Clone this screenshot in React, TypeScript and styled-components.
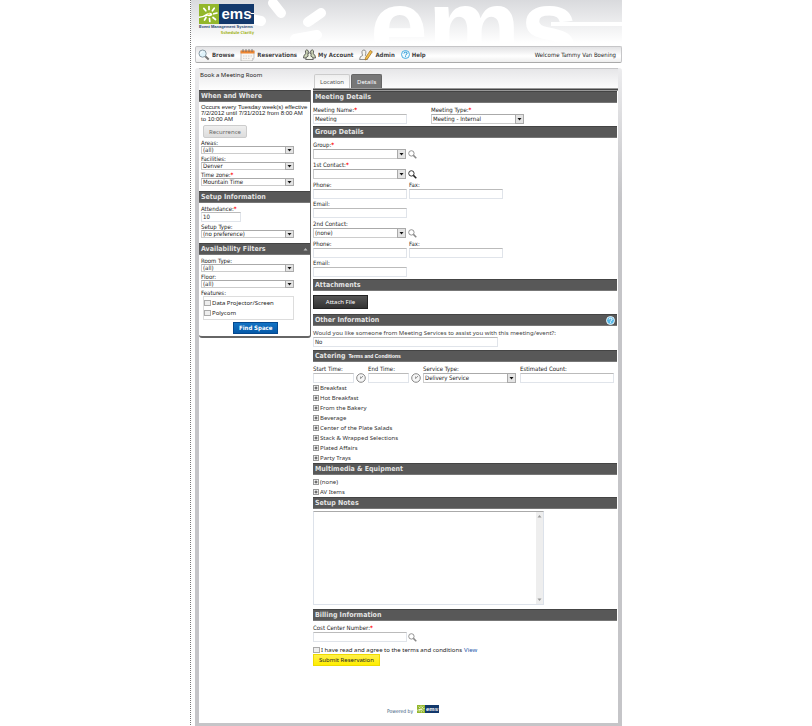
import React from 'react';
import styled, { createGlobalStyle, css } from 'styled-components';

const narrow = `'DejaVu Sans Condensed', 'DejaVu Sans', Verdana, sans-serif`;
const wide = `'DejaVu Sans', Verdana, sans-serif`;
const medium = `'Noto Sans', 'DejaVu Sans', sans-serif`;
const compact = `'Liberation Sans', Arial, sans-serif`;

const GlobalStyle = createGlobalStyle`
  * { box-sizing: border-box; }
  body { margin: 0; background: #fff; color: #222; font: 6px/8px ${narrow}; }
  button, input, select, textarea { font: inherit; color: inherit; margin: 0; }
  svg { display: block; flex: none; }
`;

const Page = styled.div`
  max-width: 432px;
  margin: 0 auto;
  padding-left: 4px;
  border-left: 1px dotted #777;
`;

const Banner = styled.header`
  position: relative;
  height: 46px;
  margin-left: -4px;
  background: linear-gradient(#d9dadd, #fff 43px);
  overflow: hidden;
`;

const BannerArt = styled.svg`
  position: absolute;
  inset: 0;
`;

const Brand = styled.a`
  position: absolute;
  left: 8px;
  top: 4px;
  text-decoration: none;
`;

const Nav = styled.nav`
  display: flex;
  align-items: center;
  height: 17px;
  padding: 0 5px 0 2px;
  gap: 6px;
  border: 1px solid #c6c6c8;
  border-bottom-color: #aaa;
  border-radius: 2px;
  background: linear-gradient(#e2e2e4, #fff 60%, #eee);
`;

const NavLink = styled.a`
  display: flex;
  align-items: center;
  gap: 2px;
  color: #444;
  font-weight: bold;
  text-decoration: none;
`;

const Welcome = styled.span`
  margin-left: auto;
`;

const Panel = styled.main`
  margin-top: 5px;
  padding: 0 4px 4px;
  border-radius: 3px 3px 0 0;
  background: linear-gradient(#ececee, #c5c5c8 130px);
`;

const Sheet = styled.div`
  display: grid;
  grid-template-columns: 112px 1fr;
  column-gap: 2px;
  align-items: start;
  padding-right: 1px;
  background: linear-gradient(#e6e6e8, #fff 22px);
  border-top: 1px solid #c6c6c8;
`;

const Title = styled.h1`
  margin: 0;
  padding: 2px 1px 0;
  height: 21px;
  font: normal 6px/8px ${medium};
`;

const SideCard = styled.div`
  border: solid #666;
  border-width: 0 1px 2px 0;
  border-radius: 0 0 3px 3px;
`;

const SideBody = styled.div<{ $top?: number; $bottom?: number }>`
  display: flex;
  flex-direction: column;
  align-items: flex-start;
  gap: 1px;
  padding: ${p => p.$top ?? 2}px 16px ${p => p.$bottom ?? 5}px 2px;
`;

const Bar = styled.h2`
  display: flex;
  align-items: center;
  gap: 3px;
  height: 12px;
  margin: 0;
  padding: 0 2px;
  border: solid #777;
  border-width: 1px 0;
  border-top-color: #444;
  background: #585858;
  color: #e4e4e4;
  font: bold 7px/10px ${narrow};
`;

const BarLink = styled.a`
  color: #fff;
  font: bold 5px/10px ${compact};
  text-decoration: none;
`;

const BarEnd = styled.span`
  margin-left: auto;
`;

const Schedule = styled.p`
  margin: 0 -14px 2px 0;
  font: 6px/6px ${compact};
`;

const SoftButton = styled.button`
  height: 13px;
  margin: 0 0 0 2px;
  padding: 0 5px;
  border: 1px solid #ccc;
  border-radius: 2px;
  background: linear-gradient(#eee, #ddd);
  color: #666;
  font-family: ${medium};
`;

const Field = styled.div<{ $w?: number }>`
  display: flex;
  flex-direction: column;
  width: ${p => (p.$w ? p.$w + 'px' : '100%')};
`;

const Label = styled.label<{ $tight?: boolean; $wide?: boolean }>`
  height: ${p => (p.$tight ? 7 : 8)}px;
  line-height: ${p => (p.$tight ? 7 : 8)}px;
  white-space: nowrap;
  ${p => p.$wide && css`font-family: ${medium}; color: #444;`}
`;

const Req = styled.span`
  color: #f00;
  font-weight: bold;
`;

const TextBox = styled.input`
  width: 100%;
  height: 10px;
  padding: 0 1px 1px;
  border: 1px solid #e0e4ea;
  border-top-color: #bbb;
  background: #fff;
  outline: none;
`;

const SelectWrap = styled.div<{ $h: number }>`
  position: relative;
  height: ${p => p.$h}px;
  svg { position: absolute; right: 0; top: 0; pointer-events: none; }
`;

const SelectBox = styled.select<{ $tight?: boolean }>`
  appearance: none;
  display: block;
  width: 100%;
  height: 100%;
  padding: 0 9px 0 1px;
  border: 1px solid #ccc;
  border-top-color: #aaa;
  border-radius: 0;
  background: #fff;
  line-height: ${p => (p.$tight ? 6 : 8)}px;
`;

const Features = styled.fieldset`
  width: 91px;
  margin: 0 0 1px 2px;
  padding: 1px 0;
  border: 1px solid #ddd;
`;

const Check = styled.label<{ $h: number }>`
  display: flex;
  align-items: center;
  gap: 1px;
  height: ${p => p.$h}px;
  font-family: ${medium};
  white-space: nowrap;
  input {
    appearance: none;
    width: 7px;
    height: 6px;
    border: 1px solid #aaa;
    background: #eee;
  }
  a { color: #2255aa; text-decoration: none; margin-left: 1px; }
`;

const FindButton = styled.button`
  height: 12px;
  margin-left: 32px;
  padding: 0 5px;
  border: 1px solid #04488f;
  background: linear-gradient(#1272c4, #0659a8);
  color: #fff;
  font-weight: bold;
`;

const Tabs = styled.div`
  display: flex;
  align-items: flex-end;
  gap: 1px;
  height: 19px;
  padding-left: 1px;
`;

const Tab = styled.button<{ $on?: boolean }>`
  height: 14px;
  padding: 0 5px;
  border: 1px solid ${p => (p.$on ? '#666' : '#ccc')};
  border-bottom: 0;
  border-radius: 2px 2px 0 0;
  background: ${p => (p.$on ? '#777' : 'linear-gradient(#eee, #fff)')};
  color: ${p => (p.$on ? '#fff' : '#555')};
  font-family: ${medium};
`;

const TabRule = styled.div`
  height: 3px;
  margin-right: -1px;
  border-top: 1px solid #999;
  border-bottom: 1px solid #999;
  background: #444;
`;

const Block = styled.div<{ $top?: number; $bottom?: number }>`
  padding: ${p => p.$top ?? 3}px 0 ${p => p.$bottom ?? 3}px;
`;

const Row = styled.div<{ $gap?: number; $after?: number }>`
  display: flex;
  align-items: flex-end;
  gap: ${p => p.$gap ?? 2}px;
  margin-bottom: ${p => p.$after ?? 0}px;
`;

const IconButton = styled.button`
  display: flex;
  padding: 0;
  border: 0;
  background: none;
`;

const DarkButton = styled.button`
  display: block;
  width: 55px;
  height: 14px;
  padding: 0;
  border: 1px solid #222;
  background: linear-gradient(#555, #333);
  color: #fff;
  font-family: ${medium};
`;

const Tree = styled.ul`
  margin: 0;
  padding: 0;
  list-style: none;
`;

const TreeItem = styled.button`
  display: flex;
  align-items: center;
  gap: 1px;
  height: 10px;
  padding: 0;
  border: 0;
  background: none;
  && { color: #333; font-family: ${medium}; }
`;

const Notes = styled.div`
  display: flex;
  width: 231px;
  height: 94px;
  border: 1px solid #dde2ea;
  border-top-color: #aaa;
`;

const NotesBox = styled.textarea`
  flex: 1;
  padding: 1px;
  border: 0;
  resize: none;
  outline: none;
`;

const Track = styled.div`
  display: flex;
  flex-direction: column;
  justify-content: space-between;
  padding: 2px 1px;
  background: #eee;
`;

const SubmitButton = styled.button`
  display: block;
  height: 12px;
  padding: 0 5px;
  border: 1px solid #eedb00;
  background: linear-gradient(#fff04a, #ffee00);
  font-family: ${medium};
`;

const Footer = styled.footer`
  display: flex;
  align-items: center;
  gap: 4px;
  padding: 36px 0 7px 74px;
  color: #335577;
  font-size: 5px;
  svg { margin-bottom: 3px; }
`;

const Arrow = ({ h }: { h: number }) => (
  <svg width="9" height={h} viewBox={`0 0 9 ${h}`}>
    <rect x=".5" y=".5" width="8" height={h - 1} fill="#e4e4e4" stroke="#aaa" />
    <path d={`M2.5 ${h / 2 - 1}h4l-2 2.5z`} fill="#111" />
  </svg>
);

const Lens = ({ color = '#888', size = 9 }: { color?: string; size?: number }) => (
  <svg width={size} height={size} viewBox="0 0 9 9" fill="none" stroke={color}>
    <circle cx="3.4" cy="3.4" r="2.7" strokeWidth=".9" />
    <path d="M5.4 5.4L8.3 8.2" strokeWidth="1.5" />
  </svg>
);

const Clock = () => (
  <svg width="10" height="10" viewBox="0 0 10 10" fill="none" stroke="#888">
    <circle cx="5" cy="5" r="4.3" fill="#f6f6f6" />
    <path d="M4.600 5.600L7 3M4.600 5.600V3.500" strokeWidth=".9" />
  </svg>
);

const HelpIcon = ({ solid }: { solid?: boolean }) => (
  <svg width="9" height="9" viewBox="0 0 9 9">
    <circle cx="4.5" cy="4.5" r="4" fill={solid ? '#58b9e8' : '#eefaff'} stroke={solid ? '#fff' : '#3aa5dc'} strokeWidth=".9" />
    <path d="M3 3.5q.1-1.4 1.6-1.4t1.5 1.2q0 .7-1 1.2-.5.3-.5 1M4.5 6.3v.9" fill="none" stroke={solid ? '#fff' : '#1a8fcf'} />
  </svg>
);

const Plus = () => (
  <svg width="6" height="6" viewBox="0 0 6 6" fill="none">
    <rect x=".5" y=".5" width="5" height="5" fill="#f4f4f4" stroke="#999" />
    <path d="M1.5 3h3M3 1.5v3" stroke="#333" strokeWidth=".9" />
  </svg>
);

const BrowseIcon = () => (
  <svg width="12" height="12" viewBox="0 0 12 12" fill="none">
    <path d="M7 7l3.7 3.5" stroke="#777" strokeWidth="2" />
    <circle cx="4.6" cy="4.6" r="3.6" fill="#dff3fb" stroke="#8a9ba5" />
    <path d="M2.6 4.6q.1-1.8 2-2" stroke="#fff" />
  </svg>
);

const CalendarIcon = () => (
  <svg width="15" height="12" viewBox="0 0 15 12">
    <path d="M1 2h13v7l-2 3H1z" fill="#f8f6f2" stroke="#aaa" strokeWidth=".7" />
    <path d="M.5 1.500h14v3H.5z" fill="#ee8630" />
    <path d="M3 0v3M6 0v3M9 0v3M12 0v3" stroke="#666" strokeWidth=".8" />
    <path d="M3 7h9M3 9.400h7" stroke="#d0d0d0" strokeDasharray="1.5 1" />
    <path d="M14 9l-2 3v-3z" fill="#ccc" />
  </svg>
);

const PeopleIcon = () => (
  <svg width="13" height="11" viewBox="0 0 13 11" stroke="#444" strokeWidth=".8">
    <path d="M.5 9q0-3.500 2.300-4.200Q1.500 1 3.800.8q2.500.2 1.300 4h2.800Q6.700 1 9.200.8q2.300.2 1 4Q12.500 5.500 12.500 9z" fill="#cfd8b8" />
    <path d="M2.700 10.500q0-2.800 2.400-3.300-1.200-3.200 1.400-3.400 2.600.2 1.400 3.400 2.400.5 2.400 3.300z" fill="#f3f6e8" />
  </svg>
);

const AdminIcon = () => (
  <svg width="14" height="12" viewBox="0 0 14 12" fill="none" strokeWidth=".8">
    <path d="M.6 10.500q0-3.500 3-4Q1.800 1.200 4.900 1q3 .2 1.500 5.500 2 .5 2 4z" fill="#f5f5f0" stroke="#777" />
    <path d="M6 11l.7-2.600L11.300 1.500l2 1.300-4.700 7z" fill="#f3c04b" stroke="#a87625" />
  </svg>
);

const Burst = () => (
  <>
    <rect width="20" height="20" fill="#93b72b" />
    <g stroke="#fff" strokeWidth="1.700" strokeLinecap="round">
      <path d="M10 2.500v3M15.200 4.200l-1.800 2.600M18 9l-3.200.8M4.800 4.400l2 2.400M16.500 15.500l-2.500-2M10.800 17.500l-.3-2.800M5.500 16l1.500-2.500" />
    </g>
    <path d="M0 12.500q5-.5 8-3 4-2 5.500.7-1 3-5 1.500Q5 13 0 14z" fill="#fff" />
    <path d="M8.500 9.800q2-1 2.800.3-.8 1.400-2.800.4z" fill="#e8df3a" />
  </>
);

const LogoMark = ({ width = 55 }: { width?: number }) => (
  <svg width={width} height={Math.round((width * 20) / 55)} viewBox="0 0 55 20">
    <Burst />
    <rect x="20" width="35" height="20" fill="#12386b" />
    <text x="22.500" y="14.500" fill="#fff" fontFamily="Liberation Sans, sans-serif" fontWeight="bold" fontSize="15">ems</text>
    <path d="M51.500 9.500h3.500" stroke="#fff" strokeWidth="1" />
  </svg>
);

const Tagline = styled.span<{ $second?: boolean }>`
  display: block;
  width: 55px;
  text-align: ${p => (p.$second ? 'right' : 'left')};
  color: ${p => (p.$second ? '#a5b51e' : '#23446f')};
  font: bold 4px/6px ${p => (p.$second ? narrow : compact)};
  white-space: nowrap;
`;

type PickProps = { id: string; label: string; value?: string; required?: boolean; w?: number; tight?: boolean };

const Pick = ({ id, label, value = '', required, w, tight }: PickProps) => {
  const h = tight ? 8 : 10;
  return (
    <Field $w={w}>
      <Label htmlFor={id} $tight={tight}>{label}{required && <Req>*</Req>}</Label>
      <SelectWrap $h={h}>
        <SelectBox id={id} $tight={tight} defaultValue={value}><option>{value}</option></SelectBox>
        <Arrow h={h} />
      </SelectWrap>
    </Field>
  );
};

type EntryProps = PickProps & { wide?: boolean };

const Entry = ({ id, label, value = '', required, w, tight, wide: isWide }: EntryProps) => (
  <Field $w={w}>
    <Label htmlFor={id} $tight={tight} $wide={isWide}>{label}{required && <Req>*</Req>}</Label>
    <TextBox id={id} defaultValue={value} />
  </Field>
);

const Contact = ({ id, label, value, required, dark }: { id: string; label: string; value?: string; required?: boolean; dark?: boolean }) => (
  <>
    <Row $after={2}>
      <Pick id={id} label={label} value={value} required={required} w={93} />
      <IconButton aria-label={`Search ${label}`}><Lens color={dark ? '#222' : '#888'} /></IconButton>
    </Row>
    <Row $after={1}>
      <Entry id={id + 'phone'} label="Phone:" w={94} />
      <Entry id={id + 'fax'} label="Fax:" w={94} />
    </Row>
    <Row $after={2}>
      <Entry id={id + 'email'} label="Email:" w={94} />
    </Row>
  </>
);

const List = ({ items }: { items: string[] }) => (
  <Tree>{items.map(t => <li key={t}><TreeItem><Plus />{t}</TreeItem></li>)}</Tree>
);

const menu = ['Breakfast', 'Hot Breakfast', 'From the Bakery', 'Beverage', 'Center of the Plate Salads', 'Stack & Wrapped Selections', 'Plated Affairs', 'Party Trays'];

export default function App() {
  return (
    <>
      <GlobalStyle />
      <Page>
        <Banner>
          <BannerArt width="431" height="46" viewBox="0 0 431 46">
            <g stroke="#fff" strokeLinecap="round" strokeWidth="10">
              <path d="M82 3l8 10M130 13L117 22M60 19l10 2M104 39l22 -4" />
            </g>
            <text x="179" y="62" fill="#fff" fontFamily="Liberation Sans, sans-serif" fontWeight="bold" fontSize="104">ems</text>
            <path d="M360 24h71" stroke="#fff" strokeWidth="4" />
          </BannerArt>
          <Brand href="#" aria-label="ems home">
            <LogoMark />
            <Tagline>Event Management Systems</Tagline>
            <Tagline $second>Schedule Clarity</Tagline>
          </Brand>
        </Banner>

        <Nav>
          <NavLink href="#"><BrowseIcon />Browse</NavLink>
          <NavLink href="#"><CalendarIcon />Reservations</NavLink>
          <NavLink href="#"><PeopleIcon />My Account</NavLink>
          <NavLink href="#"><AdminIcon />Admin</NavLink>
          <NavLink href="#"><HelpIcon />Help</NavLink>
          <Welcome>Welcome Tammy Van Boening</Welcome>
        </Nav>

        <Panel>
          <Sheet>
            <aside>
              <Title>Book a Meeting Room</Title>
              <SideCard>
                <Bar>When and Where</Bar>
                <SideBody>
                  <Schedule>Occurs every Tuesday week(s) effective 7/2/2012 until 7/31/2012 from 8:00 AM to 10:00 AM</Schedule>
                  <SoftButton>Recurrence</SoftButton>
                  <Pick tight id="areas" label="Areas:" value="(all)" />
                  <Pick tight id="facilities" label="Facilities:" value="Denver" />
                  <Pick tight id="zone" label="Time zone:" value="Mountain Time" required />
                </SideBody>
                <Bar>Setup Information</Bar>
                <SideBody>
                  <Entry tight id="attendance" label="Attendance:" value="10" required w={40} />
                  <Pick tight id="setup" label="Setup Type:" value="(no preference)" />
                </SideBody>
                <Bar>Availability Filters<BarEnd><svg width="5" height="4" viewBox="0 0 5 4"><path d="M.5 3.500l2-2.500 2 2.500z" fill="#bbb" /></svg></BarEnd></Bar>
                <SideBody $bottom={2}>
                  <Pick tight id="room" label="Room Type:" value="(all)" />
                  <Pick tight id="floor" label="Floor:" value="(all)" />
                  <div>
                    <Label as="div" $tight id="features">Features:</Label>
                    <Features aria-labelledby="features">
                      <Check $h={10}><input type="checkbox" />Data Projector/Screen</Check>
                      <Check $h={10}><input type="checkbox" />Polycom</Check>
                    </Features>
                  </div>
                  <FindButton>Find Space</FindButton>
                </SideBody>
              </SideCard>
            </aside>

            <section>
              <Tabs>
                <Tab>Location</Tab>
                <Tab $on>Details</Tab>
              </Tabs>
              <TabRule />
              <Bar>Meeting Details</Bar>
              <Block $bottom={2}>
                <Row $gap={24}>
                  <Entry id="name" label="Meeting Name:" value="Meeting" required w={94} />
                  <Pick id="type" label="Meeting Type:" value="Meeting - Internal" required w={93} />
                </Row>
              </Block>
              <Bar>Group Details</Bar>
              <Block $bottom={0}>
                <Row $after={2}>
                  <Pick id="group" label="Group:" required w={93} />
                  <IconButton aria-label="Search groups"><Lens /></IconButton>
                </Row>
                <Contact id="c1" label="1st Contact:" required dark />
                <Contact id="c2" label="2nd Contact:" value="(none)" />
              </Block>
              <Bar>Attachments</Bar>
              <Block $top={4} $bottom={5}><DarkButton>Attach File</DarkButton></Block>
              <Bar>Other Information<BarEnd><HelpIcon solid /></BarEnd></Bar>
              <Block>
                <Entry wide id="assist" label="Would you like someone from Meeting Services to assist you with this meeting/event?:" value="No" w={185} />
              </Block>
              <Bar>Catering <BarLink href="#">Terms and Conditions</BarLink></Bar>
              <Block $bottom={0}>
                <Row>
                  <Entry id="start" label="Start Time:" w={41} />
                  <IconButton aria-label="Pick start time"><Clock /></IconButton>
                  <Entry id="end" label="End Time:" w={41} />
                  <IconButton aria-label="Pick end time"><Clock /></IconButton>
                  <Row $gap={4}>
                    <Pick id="service" label="Service Type:" value="Delivery Service" w={93} />
                    <Entry id="count" label="Estimated Count:" w={94} />
                  </Row>
                </Row>
                <List items={menu} />
              </Block>
              <Bar>Multimedia &amp; Equipment</Bar>
              <Block $top={2} $bottom={0}><List items={['(none)', 'AV Items']} /></Block>
              <Bar>Setup Notes</Bar>
              <Block $top={2} $bottom={4}>
                <Notes>
                  <NotesBox aria-label="Setup Notes" />
                  <Track>
                    <svg width="5" height="4" viewBox="0 0 5 4"><path d="M.5 3.500l2-2.500 2 2.500z" fill="#999" /></svg>
                    <svg width="5" height="4" viewBox="0 0 5 4"><path d="M.5.500l2 2.500 2-2.500z" fill="#999" /></svg>
                  </Track>
                </Notes>
              </Block>
              <Bar>Billing Information</Bar>
              <Block>
                <Row $after={4} $gap={1}>
                  <Entry id="cost" label="Cost Center Number:" required w={94} />
                  <IconButton aria-label="Search cost centers"><Lens /></IconButton>
                </Row>
                <Check $h={8}><input type="checkbox" />I have read and agree to the terms and conditions <a href="#">View</a></Check>
                <SubmitButton>Submit Reservation</SubmitButton>
              </Block>
              <Footer>Powered by <LogoMark width={22} /></Footer>
            </section>
          </Sheet>
        </Panel>
      </Page>
    </>
  );
}
